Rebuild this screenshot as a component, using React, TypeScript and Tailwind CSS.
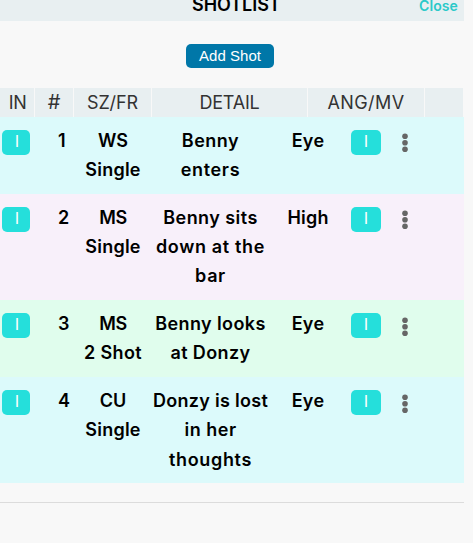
import React from "react";

type Line = { text: string; tracking: string };

type Shot = {
  id: number;
  bg: string;
  height: string;
  leading: string;
  dots: string;
  size: Line[];
  detail: Line[];
  angle: Line;
};

const single: Line = { text: "Single", tracking: "tracking-[0.25px]" };
const eye: Line = { text: "Eye", tracking: "tracking-[0.3px]" };

const shots: Shot[] = [
  {
    id: 1,
    bg: "bg-[#dcfafb]",
    height: "h-[77px]",
    leading: "leading-[29.25px]",
    dots: "mt-[16px]",
    size: [{ text: "WS", tracking: "tracking-normal" }, single],
    detail: [
      { text: "Benny", tracking: "tracking-[0.5px]" },
      { text: "enters", tracking: "tracking-[0.65px]" },
    ],
    angle: eye,
  },
  {
    id: 2,
    bg: "bg-[#f8f0fa]",
    height: "h-[106px]",
    leading: "leading-[29px]",
    dots: "mt-[16px]",
    size: [{ text: "MS", tracking: "tracking-[-0.3px]" }, single],
    detail: [
      { text: "Benny sits", tracking: "tracking-[0.45px]" },
      { text: "down at the", tracking: "tracking-[0.65px]" },
      { text: "bar", tracking: "tracking-[0.65px]" },
    ],
    angle: { text: "High", tracking: "tracking-[0.2px]" },
  },
  {
    id: 3,
    bg: "bg-[#e0fded]",
    height: "h-[77px]",
    leading: "leading-[29.25px]",
    dots: "mt-[17px]",
    size: [
      { text: "MS", tracking: "tracking-[-0.3px]" },
      { text: "2 Shot", tracking: "tracking-[0.35px]" },
    ],
    detail: [
      { text: "Benny looks", tracking: "tracking-[0.4px]" },
      { text: "at Donzy", tracking: "tracking-[0.4px]" },
    ],
    angle: eye,
  },
  {
    id: 4,
    bg: "bg-[#dcfafb]",
    height: "h-[106px]",
    leading: "leading-[29.25px]",
    dots: "mt-[17px]",
    size: [{ text: "CU", tracking: "tracking-normal" }, single],
    detail: [
      { text: "Donzy is lost", tracking: "tracking-[0.3px]" },
      { text: "in her", tracking: "tracking-[0.5px]" },
      { text: "thoughts", tracking: "tracking-[0.65px]" },
    ],
    angle: eye,
  },
];

function Lines({ lines }: { lines: Line[] }) {
  return (
    <>
      {lines.map((l) => (
        <div key={l.text} className="flex justify-center">
          <span className={l.tracking}>{l.text}</span>
        </div>
      ))}
    </>
  );
}

function Badge({ className }: { className: string }) {
  return (
    <div
      className={`mt-[13px] flex h-[25px] items-center justify-center rounded-[5px] bg-[#25dfdb] pb-[2px] font-['Liberation_Sans',sans-serif] text-[16px] leading-none font-normal text-white ${className}`}
    >
      I
    </div>
  );
}

function Dots({ className }: { className: string }) {
  return (
    <svg className={`ml-[21px] h-[20px] w-[6px] fill-[#666] ${className}`} viewBox="0 0 6 20">
      <circle cx="3" cy="3.3" r="2.8" />
      <circle cx="3" cy="9.8" r="2.8" />
      <circle cx="3" cy="16.3" r="2.8" />
    </svg>
  );
}

export default function App() {
  return (
    <div className="h-[543px] w-[473px] overflow-hidden bg-[#f8f8f8] font-[Inter,sans-serif]">
      <div className="w-[464px]">
        <div className="grid h-[21px] grid-cols-[186px_1fr_52px] bg-[#e8eff1] leading-[20px]">
          <span />
          <span className="mt-[-5px] pl-[6px] text-[18px] font-semibold tracking-[-0.05px] whitespace-nowrap text-black">
            SHOTLIST
          </span>
          <span className="mt-[-4px] pl-[7px] text-[14px] font-semibold tracking-[0.1px] text-[#2bc9c9]">
            Close
          </span>
        </div>
        <div className="flex h-[67px] items-start pt-[23px] pl-[186px]">
          <button className="h-[24px] w-[88px] rounded-[5px] bg-[#0077a8] font-['Liberation_Sans',sans-serif] text-[15px] leading-[24px] tracking-[0.05px] text-white">
            Add Shot
          </button>
        </div>
        <div className="grid h-[29px] w-[463px] grid-cols-[34px_38px_77px_155px_116px_38px] gap-px bg-[#f8f8f8] text-center text-[18px] leading-[29px] text-[#333] *:bg-[#e8eff1]">
          <span className="pl-[1px] tracking-[-0.02em]">IN</span>
          <span className="text-[20px]">#</span>
          <span className="tracking-[-0.1px]">SZ/FR</span>
          <span className="tracking-[-0.2px]">DETAIL</span>
          <span className="tracking-[0.4px]">ANG/MV</span>
          <span />
        </div>
        {shots.map((s) => (
          <div
            key={s.id}
            className={`flex items-start text-[18px] font-semibold whitespace-nowrap text-black ${s.leading} ${s.bg} ${s.height}`}
          >
            <Badge className="ml-[2px] w-[28px] pl-[2px]" />
            <div className="w-[44px] pt-[9px] pl-[28px]">{s.id}</div>
            <div className="w-[78px] pt-[9px]">
              <Lines lines={s.size} />
            </div>
            <div className="w-[117px] pt-[9px]">
              <Lines lines={s.detail} />
            </div>
            <div className="w-[78px] pt-[9px]">
              <Lines lines={[s.angle]} />
            </div>
            <Badge className="ml-[4px] w-[30px]" />
            <Dots className={s.dots} />
          </div>
        ))}
        <div className="mt-[19px] h-px bg-[#dcdcdc]" />
      </div>
    </div>
  );
}
